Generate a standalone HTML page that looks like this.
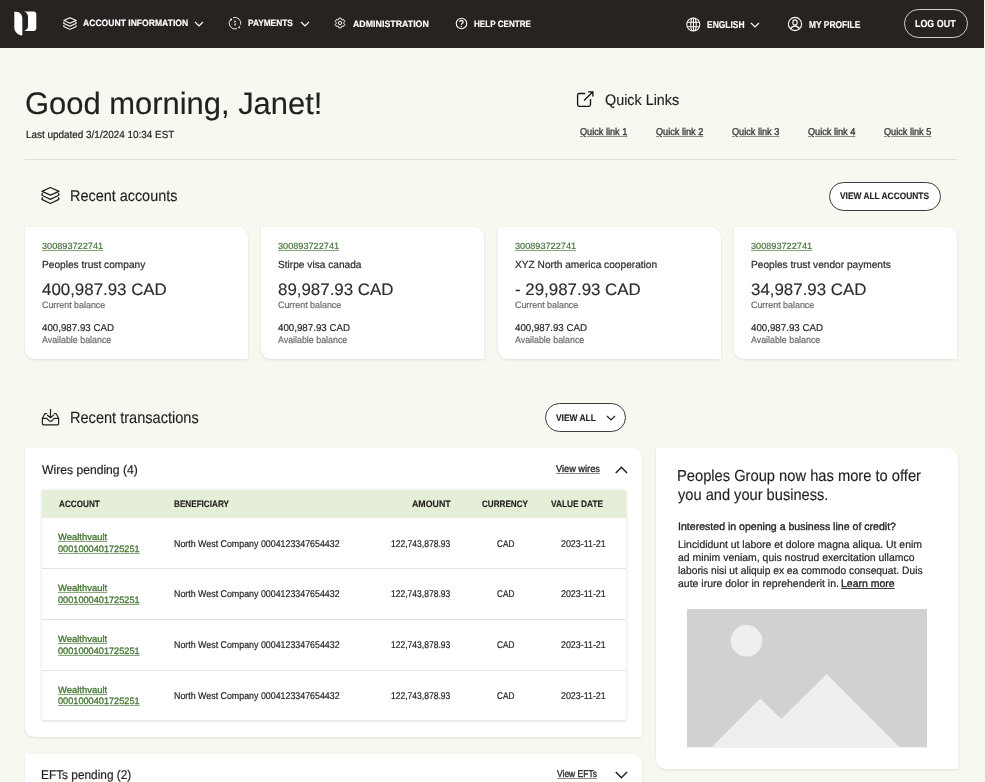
<!DOCTYPE html>
<html><head><meta charset="utf-8"><title>Dashboard</title>
<style>
html,body{margin:0;padding:0;text-rendering:geometricPrecision;}
body{width:985px;height:782px;overflow:hidden;position:relative;background:#f6f9f0;font-family:"Liberation Sans",sans-serif;}
.t{position:absolute;white-space:nowrap;line-height:1;transform-origin:0 0;}
.abs{position:absolute;}
svg{position:absolute;overflow:visible;}
.hdr{left:0;top:0;width:984px;height:48px;background:#272321;}
.card{background:#fff;border-radius:0 9.5px 0 9.5px;box-shadow:0 1px 3px rgba(0,0,0,0.09),0 0 1px rgba(0,0,0,0.10);}
.pill{border:1px solid #3a3a3a;border-radius:15px;background:#fff;box-sizing:border-box;}
.row{left:42px;width:584px;height:1px;background:#e3e3e3;}
</style></head>
<body>
<div id="wrap" style="position:absolute;left:0;top:0;width:985px;height:782px;will-change:transform;">
<div class="abs hdr"></div>
<!-- logo -->
<svg width="40" height="40" style="left:0;top:0" viewBox="0 0 40 40">
<path fill="#fff" d="M14.3,11.7 L16.3,11.7 C20,11.9 22.3,14.6 22.3,18.6 L22.3,35.6 C17.8,35.2 14.3,32 14.3,27.6 Z"/>
<path fill="#fff" d="M24,11.4 L33.4,11.4 Q36.3,11.4 36.3,14.3 L36.3,28.1 Q36.3,31 33.4,31 L24,31 C26.6,30.2 28,28.4 28,26 L28,16.6 C28,14.1 26.6,12.2 24,11.4 Z"/>
</svg>
<!-- header icons -->
<svg width="14" height="13" style="left:62.8px;top:16.6px" viewBox="0 0 19 17" fill="none" stroke="#fff" stroke-width="1.4" stroke-linejoin="round">
<path d="M1,4.3 L9.4,0.6 L18,4.3 L9.4,8.2 Z"/>
<path d="M1.8,6.4 Q0.2,7.6 1.4,8.6 L9.4,12.3 L17.4,8.6 Q18.6,7.6 17,6.4"/>
<path d="M1.8,10.6 Q0.2,11.8 1.4,12.8 L9.4,16.5 L17.4,12.8 Q18.6,11.8 17,10.6"/>
</svg>
<svg width="14" height="14" style="left:228px;top:16px" viewBox="0 0 14 14" fill="none" stroke="#e6e6e6" stroke-width="1">
<path d="M2.9,3.1 A5.8,5.8 0 0 0 9.0,12.65"/>
<path d="M5.0,1.75 A5.8,5.8 0 0 1 12.6,8.7"/>
<circle cx="3.2" cy="3.4" r="1.0" fill="#fff" stroke="none"/>
<path d="M9.6,11.9 L12.2,9.6 L11.9,12.3 Z" fill="#ddd" stroke="none"/>
<path d="M8.0,5.6 Q7,5 6.3,5.5 Q5.9,6.3 7,6.9 Q8.2,7.5 7.7,8.5 Q7,9.1 6.0,8.6 M7,4.6 V5.1 M7,9.1 V9.7" stroke="#d8d8d8" stroke-width="0.9"/>
</svg>
<svg width="12" height="12" style="left:334.4px;top:17.4px" viewBox="-0.5 -0.5 13 13" fill="none" stroke="#fff" stroke-width="1.05" stroke-linejoin="round">
<path d="M4.17,2.56 L4.88,0.72 L7.12,0.72 L7.83,2.56 L8.07,2.69 L10.01,2.39 L11.14,4.33 L9.90,5.86 L9.90,6.14 L11.14,7.67 L10.01,9.61 L8.07,9.31 L7.83,9.44 L7.12,11.28 L4.88,11.28 L4.17,9.44 L3.93,9.31 L1.99,9.61 L0.86,7.67 L2.10,6.14 L2.10,5.86 L0.86,4.33 L1.99,2.39 L3.93,2.69 Z"/>
<circle cx="6" cy="6" r="1.75"/>
</svg>
<svg width="13" height="13" style="left:455.4px;top:17px" viewBox="0 0 13 13" fill="none" stroke="#fff" stroke-width="1.1">
<circle cx="6.5" cy="6.5" r="5.25"/>
<path d="M4.7,5 Q4.8,3.3 6.5,3.3 Q8.2,3.4 8.2,4.9 Q8.2,5.9 6.9,6.5 Q6.4,6.9 6.4,7.8" stroke-width="1.2"/>
<circle cx="6.4" cy="9.4" r="0.75" fill="#fff" stroke="none"/>
</svg>
<svg width="15" height="15" style="left:685.6px;top:17px" viewBox="0 0 15 15" fill="none" stroke="#fff" stroke-width="1.05">
<circle cx="7.3" cy="7.5" r="6.5"/>
<path d="M1.2,5.3 H13.8 M1.2,9.7 H13.8 M7.5,0.8 V14.2"/>
<path d="M5.9,1 Q3.6,7.5 5.9,14 M9.1,1 Q11.4,7.5 9.1,14"/>
</svg>
<svg width="16" height="16" style="left:786.5px;top:16.3px" viewBox="0 0 16 16" fill="none" stroke="#fff" stroke-width="1.1">
<circle cx="8" cy="8" r="6.6"/>
<ellipse cx="8" cy="6.5" rx="2.2" ry="2.6"/>
<path d="M3.4,13.1 Q4.6,10.1 8,10.1 Q11.4,10.1 12.6,13.1"/>
</svg>
<!-- chevrons header -->
<svg width="10" height="6" style="left:194.3px;top:20.6px" viewBox="0 0 10 6" fill="none" stroke="#fff" stroke-width="1.2"><path d="M1,1 L5,5 L9,1"/></svg>
<svg width="10" height="6" style="left:300px;top:20.6px" viewBox="0 0 10 6" fill="none" stroke="#fff" stroke-width="1.2"><path d="M1,1 L5,5 L9,1"/></svg>
<svg width="10" height="6" style="left:750.3px;top:21.6px" viewBox="0 0 10 6" fill="none" stroke="#fff" stroke-width="1.2"><path d="M1,1 L5,5 L9,1"/></svg>
<div class="abs" style="left:904px;top:9px;width:64px;height:29px;border:1.3px solid #cfcfcf;border-radius:15px;box-sizing:border-box;"></div>

<!-- greeting divider -->
<div class="abs" style="left:25px;top:159px;width:932px;height:1px;background:#dfe2da;"></div>
<!-- quick links icon -->
<svg width="18" height="18" style="left:576px;top:90px" viewBox="576 90 18 18" fill="none" stroke="#151515" stroke-width="1.35">
<path d="M585.3,93.5 H579.3 Q577.6,93.5 577.6,95.2 V104.6 Q577.6,106.3 579.3,106.3 H588.8 Q590.5,106.3 590.5,104.6 V99.1"/>
<path d="M584.1,100.5 L592.4,92.2 M588,91.8 H592.9 V96.6"/>
</svg>
<!-- recent accounts icon -->
<svg width="19" height="17" style="left:41px;top:187px" viewBox="0 0 19 17" fill="none" stroke="#231f20" stroke-width="1.35" stroke-linejoin="round">
<path d="M1,4.3 L9.4,0.5 L18,4.3 L9.4,8.2 Z"/>
<path d="M1.8,6.3 Q0.3,7.5 1.4,8.5 L9.4,12.3 L17.4,8.5 Q18.5,7.5 17,6.3"/>
<path d="M1.8,10.5 Q0.3,11.7 1.4,12.7 L9.4,16.5 L17.4,12.7 Q18.5,11.7 17,10.5"/>
</svg>
<div class="abs pill" style="left:828.5px;top:182px;width:112.5px;height:28.5px;"></div>
<!-- account cards -->
<div class="abs card" style="left:25px;top:227px;width:223px;height:132px;"></div>
<div class="abs card" style="left:261.3px;top:227px;width:223px;height:132px;"></div>
<div class="abs card" style="left:497.7px;top:227px;width:223px;height:132px;"></div>
<div class="abs card" style="left:734px;top:227px;width:223px;height:132px;"></div>

<!-- recent transactions -->
<svg width="18" height="18" style="left:41px;top:408px" viewBox="41 408 18 18" fill="none" stroke="#231f20" stroke-width="1.15" stroke-linejoin="round" stroke-linecap="round">
<path d="M50.5,409.3 V417.4 M47.5,415.2 L50.5,417.7 L53.5,415.2"/>
<path d="M46.6,413.6 H45.4 Q44.9,413.6 44.6,414.1 L42.4,418.3 V423.8 Q42.4,424.8 43.4,424.8 H57.6 Q58.6,424.8 58.6,423.8 V418.3 L56.4,414.1 Q56.1,413.6 55.6,413.6 H54.4"/>
<path d="M42.4,418.3 H46.2 Q47.1,418.3 47.7,419.3 Q48.8,421.4 50.5,421.4 Q52.2,421.4 53.3,419.3 Q53.9,418.3 54.8,418.3 H58.6"/>
</svg>
<div class="abs pill" style="left:545px;top:403px;width:81px;height:28.5px;"></div>
<svg width="10" height="6" style="left:606.4px;top:414.6px" viewBox="0 0 10 6" fill="none" stroke="#231f20" stroke-width="1.2"><path d="M1,1 L5,5 L9,1"/></svg>

<!-- wires card -->
<div class="abs card" style="left:25px;top:448px;width:617px;height:289px;"></div>
<svg width="13" height="8" style="left:614.5px;top:465.5px" viewBox="0 0 13 8" fill="none" stroke="#231f20" stroke-width="1.5"><path d="M0.8,7 L6.4,1.3 L12,7"/></svg>
<div class="abs" style="left:42px;top:490px;width:584px;height:229.5px;background:#fff;box-shadow:0 1px 3px rgba(0,0,0,0.15),0 0 1px rgba(0,0,0,0.06);"></div>
<div class="abs" style="left:42px;top:490px;width:584px;height:27.5px;background:#e5efd7;"></div>
<div class="abs row" style="top:568px;"></div>
<div class="abs row" style="top:619px;"></div>
<div class="abs row" style="top:669.5px;"></div>

<!-- promo card -->
<div class="abs card" style="left:656px;top:448px;width:301.7px;height:321px;"></div>
<svg width="240" height="139" style="left:686.6px;top:609.3px" viewBox="686.6 609.3 240 139">
<rect x="686.6" y="609.3" width="240" height="138.3" fill="#d1d1d1"/>
<circle cx="746.1" cy="641.1" r="15.8" fill="#efefef"/>
<path d="M711.1,747.6 L759.8,698.9 L780.8,719.2 L826.3,674.4 L899.2,747.6 Z" fill="#efefef"/>
</svg>

<!-- efts card -->
<div class="abs card" style="left:25px;top:754px;width:617px;height:80px;"></div>
<svg width="13" height="8" style="left:614.5px;top:771.3px" viewBox="0 0 13 8" fill="none" stroke="#231f20" stroke-width="1.5"><path d="M0.8,1 L6.4,6.7 L12,1"/></svg>

<div class="t" style="left:82.50px;top:19px;font-size:9.2px;font-weight:700;-webkit-text-stroke:0.15px #ffffff;color:#ffffff;transform:scaleX(0.9336);">ACCOUNT INFORMATION</div>
<div class="t" style="left:247.80px;top:19px;font-size:9.2px;font-weight:700;-webkit-text-stroke:0.15px #ffffff;color:#ffffff;transform:scaleX(0.9040);">PAYMENTS</div>
<div class="t" style="left:352.60px;top:20px;font-size:9.2px;font-weight:700;-webkit-text-stroke:0.15px #ffffff;color:#ffffff;transform:scaleX(0.9608);">ADMINISTRATION</div>
<div class="t" style="left:474.40px;top:20px;font-size:9.2px;font-weight:700;-webkit-text-stroke:0.15px #ffffff;color:#ffffff;transform:scaleX(0.8815);">HELP CENTRE</div>
<div class="t" style="left:706.80px;top:21px;font-size:10.0px;font-weight:700;-webkit-text-stroke:0.15px #ffffff;color:#ffffff;transform:scaleX(0.8455);">ENGLISH</div>
<div class="t" style="left:808.50px;top:21px;font-size:10.0px;font-weight:700;-webkit-text-stroke:0.15px #ffffff;color:#ffffff;transform:scaleX(0.8410);">MY PROFILE</div>
<div class="t" style="left:915.30px;top:20px;font-size:10.2px;font-weight:700;-webkit-text-stroke:0.15px #ffffff;color:#ffffff;transform:scaleX(0.8745);">LOG OUT</div>
<div class="t" style="left:25.10px;top:88px;font-size:31px;-webkit-text-stroke:0.15px #231f20;color:#231f20;transform:scaleX(0.9976);">Good morning, Janet!</div>
<div class="t" style="left:25.90px;top:131px;font-size:10.3px;-webkit-text-stroke:0.2px #231f20;color:#231f20;transform:scaleX(0.9630);">Last updated 3/1/2024 10:34 EST</div>
<div class="t" style="left:605.00px;top:93px;font-size:15.2px;-webkit-text-stroke:0.15px #231f20;color:#231f20;transform:scaleX(0.9449);">Quick Links</div>
<div class="t" style="left:580.20px;top:128px;font-size:9.9px;-webkit-text-stroke:0.35px #3a3a3a;color:#3a3a3a;transform:scaleX(0.9275);text-decoration:underline;text-decoration-thickness:1px;text-underline-offset:1.1px;text-decoration-color:#8c8c8c;">Quick link 1</div>
<div class="t" style="left:656.40px;top:128px;font-size:9.9px;-webkit-text-stroke:0.35px #3a3a3a;color:#3a3a3a;transform:scaleX(0.9275);text-decoration:underline;text-decoration-thickness:1px;text-underline-offset:1.1px;text-decoration-color:#8c8c8c;">Quick link 2</div>
<div class="t" style="left:732.40px;top:128px;font-size:9.9px;-webkit-text-stroke:0.35px #3a3a3a;color:#3a3a3a;transform:scaleX(0.9275);text-decoration:underline;text-decoration-thickness:1px;text-underline-offset:1.1px;text-decoration-color:#8c8c8c;">Quick link 3</div>
<div class="t" style="left:808.40px;top:128px;font-size:9.9px;-webkit-text-stroke:0.35px #3a3a3a;color:#3a3a3a;transform:scaleX(0.9275);text-decoration:underline;text-decoration-thickness:1px;text-underline-offset:1.1px;text-decoration-color:#8c8c8c;">Quick link 4</div>
<div class="t" style="left:884.40px;top:128px;font-size:9.9px;-webkit-text-stroke:0.35px #3a3a3a;color:#3a3a3a;transform:scaleX(0.9275);text-decoration:underline;text-decoration-thickness:1px;text-underline-offset:1.1px;text-decoration-color:#8c8c8c;">Quick link 5</div>
<div class="t" style="left:69.78px;top:189px;font-size:15.7px;-webkit-text-stroke:0.15px #231f20;color:#231f20;transform:scaleX(0.9190);">Recent accounts</div>
<div class="t" style="left:840.00px;top:192px;font-size:9.3px;font-weight:700;-webkit-text-stroke:0.15px #231f20;color:#231f20;transform:scaleX(0.9010);">VIEW ALL ACCOUNTS</div>
<div class="t" style="left:41.90px;top:242px;font-size:9.0px;-webkit-text-stroke:0.18px #44733a;color:#44733a;transform:scaleX(1.0167);text-decoration:underline;text-decoration-thickness:1px;text-underline-offset:0.6px;text-decoration-color:#8aa67e;">300893722741</div>
<div class="t" style="left:41.90px;top:261px;font-size:10.3px;-webkit-text-stroke:0.2px #2e2b2c;color:#2e2b2c;transform:scaleX(0.9857);">Peoples trust company</div>
<div class="t" style="left:41.90px;top:282px;font-size:16.6px;-webkit-text-stroke:0.15px #2e2b2c;color:#2e2b2c;transform:scaleX(1.0172);">400,987.93 CAD</div>
<div class="t" style="left:41.90px;top:301px;font-size:9.3px;-webkit-text-stroke:0.2px #6a6a6a;color:#6a6a6a;transform:scaleX(0.9561);">Current balance</div>
<div class="t" style="left:41.90px;top:324px;font-size:9.9px;-webkit-text-stroke:0.2px #2e2b2c;color:#2e2b2c;transform:scaleX(0.9863);">400,987.93 CAD</div>
<div class="t" style="left:41.90px;top:336px;font-size:9.6px;-webkit-text-stroke:0.2px #6a6a6a;color:#6a6a6a;transform:scaleX(0.9227);">Available balance</div>
<div class="t" style="left:278.23px;top:242px;font-size:9.0px;-webkit-text-stroke:0.18px #44733a;color:#44733a;transform:scaleX(1.0167);text-decoration:underline;text-decoration-thickness:1px;text-underline-offset:0.6px;text-decoration-color:#8aa67e;">300893722741</div>
<div class="t" style="left:278.23px;top:261px;font-size:10.3px;-webkit-text-stroke:0.2px #2e2b2c;color:#2e2b2c;transform:scaleX(0.9857);">Stirpe visa canada</div>
<div class="t" style="left:278.23px;top:282px;font-size:16.6px;-webkit-text-stroke:0.15px #2e2b2c;color:#2e2b2c;transform:scaleX(1.0172);">89,987.93 CAD</div>
<div class="t" style="left:278.23px;top:301px;font-size:9.3px;-webkit-text-stroke:0.2px #6a6a6a;color:#6a6a6a;transform:scaleX(0.9561);">Current balance</div>
<div class="t" style="left:278.23px;top:324px;font-size:9.9px;-webkit-text-stroke:0.2px #2e2b2c;color:#2e2b2c;transform:scaleX(0.9863);">400,987.93 CAD</div>
<div class="t" style="left:278.23px;top:336px;font-size:9.6px;-webkit-text-stroke:0.2px #6a6a6a;color:#6a6a6a;transform:scaleX(0.9227);">Available balance</div>
<div class="t" style="left:514.56px;top:242px;font-size:9.0px;-webkit-text-stroke:0.18px #44733a;color:#44733a;transform:scaleX(1.0167);text-decoration:underline;text-decoration-thickness:1px;text-underline-offset:0.6px;text-decoration-color:#8aa67e;">300893722741</div>
<div class="t" style="left:514.56px;top:261px;font-size:10.3px;-webkit-text-stroke:0.2px #2e2b2c;color:#2e2b2c;transform:scaleX(0.9857);">XYZ North america cooperation</div>
<div class="t" style="left:514.56px;top:282px;font-size:16.6px;-webkit-text-stroke:0.15px #2e2b2c;color:#2e2b2c;transform:scaleX(1.0172);">- 29,987.93 CAD</div>
<div class="t" style="left:514.56px;top:301px;font-size:9.3px;-webkit-text-stroke:0.2px #6a6a6a;color:#6a6a6a;transform:scaleX(0.9561);">Current balance</div>
<div class="t" style="left:514.56px;top:324px;font-size:9.9px;-webkit-text-stroke:0.2px #2e2b2c;color:#2e2b2c;transform:scaleX(0.9863);">400,987.93 CAD</div>
<div class="t" style="left:514.56px;top:336px;font-size:9.6px;-webkit-text-stroke:0.2px #6a6a6a;color:#6a6a6a;transform:scaleX(0.9227);">Available balance</div>
<div class="t" style="left:750.89px;top:242px;font-size:9.0px;-webkit-text-stroke:0.18px #44733a;color:#44733a;transform:scaleX(1.0167);text-decoration:underline;text-decoration-thickness:1px;text-underline-offset:0.6px;text-decoration-color:#8aa67e;">300893722741</div>
<div class="t" style="left:750.89px;top:261px;font-size:10.3px;-webkit-text-stroke:0.2px #2e2b2c;color:#2e2b2c;transform:scaleX(0.9857);">Peoples trust vendor payments</div>
<div class="t" style="left:750.89px;top:282px;font-size:16.6px;-webkit-text-stroke:0.15px #2e2b2c;color:#2e2b2c;transform:scaleX(1.0172);">34,987.93 CAD</div>
<div class="t" style="left:750.89px;top:301px;font-size:9.3px;-webkit-text-stroke:0.2px #6a6a6a;color:#6a6a6a;transform:scaleX(0.9561);">Current balance</div>
<div class="t" style="left:750.89px;top:324px;font-size:9.9px;-webkit-text-stroke:0.2px #2e2b2c;color:#2e2b2c;transform:scaleX(0.9863);">400,987.93 CAD</div>
<div class="t" style="left:750.89px;top:336px;font-size:9.6px;-webkit-text-stroke:0.2px #6a6a6a;color:#6a6a6a;transform:scaleX(0.9227);">Available balance</div>
<div class="t" style="left:69.81px;top:410px;font-size:16.3px;-webkit-text-stroke:0.15px #231f20;color:#231f20;transform:scaleX(0.8944);">Recent transactions</div>
<div class="t" style="left:556.00px;top:414px;font-size:9.3px;font-weight:700;-webkit-text-stroke:0.15px #231f20;color:#231f20;transform:scaleX(0.9045);">VIEW ALL</div>
<div class="t" style="left:42.00px;top:464px;font-size:12.6px;-webkit-text-stroke:0.2px #231f20;color:#231f20;transform:scaleX(0.9636);">Wires pending (4)</div>
<div class="t" style="left:555.70px;top:465px;font-size:9.8px;-webkit-text-stroke:0.35px #2a2a2a;color:#2a2a2a;transform:scaleX(0.9404);text-decoration:underline;text-decoration-thickness:1px;text-underline-offset:1.1px;text-decoration-color:#8c8c8c;">View wires</div>
<div class="t" style="left:59.00px;top:500px;font-size:9.3px;font-weight:700;-webkit-text-stroke:0.15px #231f20;color:#231f20;transform:scaleX(0.8787);">ACCOUNT</div>
<div class="t" style="left:173.80px;top:500px;font-size:9.3px;font-weight:700;-webkit-text-stroke:0.15px #231f20;color:#231f20;transform:scaleX(0.8762);">BENEFICIARY</div>
<div class="t" style="left:411.70px;top:500px;font-size:9.3px;font-weight:700;-webkit-text-stroke:0.15px #231f20;color:#231f20;transform:scaleX(0.9488);">AMOUNT</div>
<div class="t" style="left:482.30px;top:500px;font-size:9.3px;font-weight:700;-webkit-text-stroke:0.15px #231f20;color:#231f20;transform:scaleX(0.8717);">CURRENCY</div>
<div class="t" style="left:551.30px;top:500px;font-size:9.3px;font-weight:700;-webkit-text-stroke:0.15px #231f20;color:#231f20;transform:scaleX(0.8983);">VALUE DATE</div>
<div class="t" style="left:58.30px;top:533px;font-size:9.3px;-webkit-text-stroke:0.35px #4a7a3a;color:#4a7a3a;transform:scaleX(1.0143);text-decoration:underline;text-decoration-thickness:1px;text-underline-offset:0.6px;text-decoration-color:#8aa67e;">Wealthvault</div>
<div class="t" style="left:58.30px;top:545px;font-size:9.3px;-webkit-text-stroke:0.35px #4a7a3a;color:#4a7a3a;transform:scaleX(0.9867);text-decoration:underline;text-decoration-thickness:1px;text-underline-offset:0.6px;text-decoration-color:#8aa67e;">0001000401725251</div>
<div class="t" style="left:173.80px;top:540px;font-size:9.8px;-webkit-text-stroke:0.2px #231f20;color:#231f20;transform:scaleX(0.9033);">North West Company 0004123347654432</div>
<div class="t" style="left:391.40px;top:540px;font-size:9.8px;-webkit-text-stroke:0.2px #231f20;color:#231f20;transform:scaleX(0.8706);">122,743,878.93</div>
<div class="t" style="left:496.80px;top:540px;font-size:9.8px;-webkit-text-stroke:0.2px #231f20;color:#231f20;transform:scaleX(0.8429);">CAD</div>
<div class="t" style="left:560.70px;top:540px;font-size:9.8px;-webkit-text-stroke:0.2px #231f20;color:#231f20;transform:scaleX(0.9061);">2023-11-21</div>
<div class="t" style="left:58.30px;top:584px;font-size:9.3px;-webkit-text-stroke:0.35px #4a7a3a;color:#4a7a3a;transform:scaleX(1.0143);text-decoration:underline;text-decoration-thickness:1px;text-underline-offset:0.6px;text-decoration-color:#8aa67e;">Wealthvault</div>
<div class="t" style="left:58.30px;top:596px;font-size:9.3px;-webkit-text-stroke:0.35px #4a7a3a;color:#4a7a3a;transform:scaleX(0.9867);text-decoration:underline;text-decoration-thickness:1px;text-underline-offset:0.6px;text-decoration-color:#8aa67e;">0001000401725251</div>
<div class="t" style="left:173.80px;top:590px;font-size:9.8px;-webkit-text-stroke:0.2px #231f20;color:#231f20;transform:scaleX(0.9033);">North West Company 0004123347654432</div>
<div class="t" style="left:391.40px;top:590px;font-size:9.8px;-webkit-text-stroke:0.2px #231f20;color:#231f20;transform:scaleX(0.8706);">122,743,878.93</div>
<div class="t" style="left:496.80px;top:590px;font-size:9.8px;-webkit-text-stroke:0.2px #231f20;color:#231f20;transform:scaleX(0.8429);">CAD</div>
<div class="t" style="left:560.70px;top:590px;font-size:9.8px;-webkit-text-stroke:0.2px #231f20;color:#231f20;transform:scaleX(0.9061);">2023-11-21</div>
<div class="t" style="left:58.30px;top:635px;font-size:9.3px;-webkit-text-stroke:0.35px #4a7a3a;color:#4a7a3a;transform:scaleX(1.0143);text-decoration:underline;text-decoration-thickness:1px;text-underline-offset:0.6px;text-decoration-color:#8aa67e;">Wealthvault</div>
<div class="t" style="left:58.30px;top:647px;font-size:9.3px;-webkit-text-stroke:0.35px #4a7a3a;color:#4a7a3a;transform:scaleX(0.9867);text-decoration:underline;text-decoration-thickness:1px;text-underline-offset:0.6px;text-decoration-color:#8aa67e;">0001000401725251</div>
<div class="t" style="left:173.80px;top:641px;font-size:9.8px;-webkit-text-stroke:0.2px #231f20;color:#231f20;transform:scaleX(0.9033);">North West Company 0004123347654432</div>
<div class="t" style="left:391.40px;top:641px;font-size:9.8px;-webkit-text-stroke:0.2px #231f20;color:#231f20;transform:scaleX(0.8706);">122,743,878.93</div>
<div class="t" style="left:496.80px;top:641px;font-size:9.8px;-webkit-text-stroke:0.2px #231f20;color:#231f20;transform:scaleX(0.8429);">CAD</div>
<div class="t" style="left:560.70px;top:641px;font-size:9.8px;-webkit-text-stroke:0.2px #231f20;color:#231f20;transform:scaleX(0.9061);">2023-11-21</div>
<div class="t" style="left:58.30px;top:686px;font-size:9.3px;-webkit-text-stroke:0.35px #4a7a3a;color:#4a7a3a;transform:scaleX(1.0143);text-decoration:underline;text-decoration-thickness:1px;text-underline-offset:0.6px;text-decoration-color:#8aa67e;">Wealthvault</div>
<div class="t" style="left:58.30px;top:697px;font-size:9.3px;-webkit-text-stroke:0.35px #4a7a3a;color:#4a7a3a;transform:scaleX(0.9867);text-decoration:underline;text-decoration-thickness:1px;text-underline-offset:0.6px;text-decoration-color:#8aa67e;">0001000401725251</div>
<div class="t" style="left:173.80px;top:692px;font-size:9.8px;-webkit-text-stroke:0.2px #231f20;color:#231f20;transform:scaleX(0.9033);">North West Company 0004123347654432</div>
<div class="t" style="left:391.40px;top:692px;font-size:9.8px;-webkit-text-stroke:0.2px #231f20;color:#231f20;transform:scaleX(0.8706);">122,743,878.93</div>
<div class="t" style="left:496.80px;top:692px;font-size:9.8px;-webkit-text-stroke:0.2px #231f20;color:#231f20;transform:scaleX(0.8429);">CAD</div>
<div class="t" style="left:560.70px;top:692px;font-size:9.8px;-webkit-text-stroke:0.2px #231f20;color:#231f20;transform:scaleX(0.9061);">2023-11-21</div>
<div class="t" style="left:677.08px;top:469px;font-size:16px;-webkit-text-stroke:0.15px #231f20;color:#231f20;transform:scaleX(0.9185);">Peoples Group now has more to offer</div>
<div class="t" style="left:678.00px;top:488px;font-size:16px;-webkit-text-stroke:0.15px #231f20;color:#231f20;transform:scaleX(0.9141);">you and your business.</div>
<div class="t" style="left:678.00px;top:522px;font-size:10.6px;-webkit-text-stroke:0.35px #231f20;color:#231f20;transform:scaleX(0.9977);">Interested in opening a business line of credit?</div>
<div class="t" style="left:678.00px;top:540px;font-size:10.6px;-webkit-text-stroke:0.2px #231f20;color:#231f20;transform:scaleX(0.9839);">Lincididunt ut labore et dolore magna aliqua. Ut enim</div>
<div class="t" style="left:678.00px;top:553px;font-size:10.6px;-webkit-text-stroke:0.2px #231f20;color:#231f20;transform:scaleX(0.9842);">ad minim veniam, quis nostrud exercitation ullamco</div>
<div class="t" style="left:678.00px;top:566px;font-size:10.6px;-webkit-text-stroke:0.2px #231f20;color:#231f20;transform:scaleX(0.9680);">laboris nisi ut aliquip ex ea commodo consequat. Duis</div>
<div class="t" style="left:678.00px;top:579px;font-size:10.6px;-webkit-text-stroke:0.2px #231f20;color:#231f20;transform:scaleX(0.9901);">aute irure dolor in reprehenderit in.</div>
<div class="t" style="left:841.00px;top:579px;font-size:10.6px;-webkit-text-stroke:0.35px #231f20;color:#231f20;transform:scaleX(0.9889);text-decoration:underline;text-decoration-thickness:1px;text-underline-offset:1.1px;text-decoration-color:#444;">Learn more</div>
<div class="t" style="left:41.46px;top:769px;font-size:12.6px;-webkit-text-stroke:0.2px #231f20;color:#231f20;transform:scaleX(0.9411);">EFTs pending (2)</div>
<div class="t" style="left:556.80px;top:770px;font-size:9.8px;-webkit-text-stroke:0.35px #2a2a2a;color:#2a2a2a;transform:scaleX(0.8652);text-decoration:underline;text-decoration-thickness:1px;text-underline-offset:1.1px;text-decoration-color:#8c8c8c;">View EFTs</div>
</div>
</body></html>
